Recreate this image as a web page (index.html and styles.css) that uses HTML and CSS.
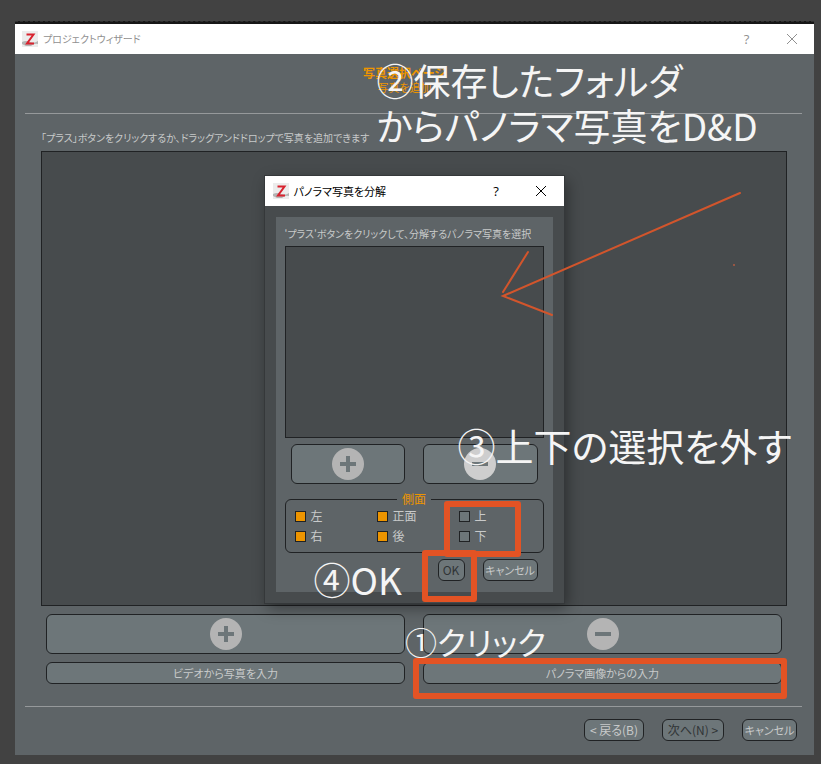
FILE: index.html
```html
<!DOCTYPE html>
<html lang="ja">
<head>
    <meta charset="UTF-8">
    <meta name="viewport" content="width=device-width, initial-scale=1.0">
    <title>プロジェクトウィザード</title>
    <link rel="stylesheet" href="styles.css">
</head>
<body>
    <div class="strip"></div>
    <div class="window">
        <!-- Title bar -->
        <div class="titlebar">
            <svg class="app-icon" viewBox="0 0 16 16">
                <rect width="16" height="16" fill="#ececec"/>
                <path d="M0 11 Q4 9 8 11 T16 10 V13 Q12 12 9 15 H4 L0 13Z" fill="#b4b4b4"/>
                <path d="M4.500 3.500 H11.500 L5 12.500 H12" fill="none" stroke="#d8232f" stroke-width="2"/>
            </svg>
            <span class="caption">プロジェクトウィザード</span>
            <button class="win-button" type="button" aria-label="ヘルプ">?</button>
            <button class="win-button" type="button" aria-label="閉じる">
                <svg viewBox="0 0 12 12"><path d="M1 1 L11 11 M11 1 L1 11"/></svg>
            </button>
        </div>

        <!-- Wizard page -->
        <div class="page-header">
            <h1>写真選択ページ</h1>
            <p>写真を追加</p>
        </div>

        <div class="page-body">
            <p class="hint">「プラス」ボタンをクリックするか、ドラッグアンドドロップで写真を追加できます</p>
            <div class="photo-list"></div>
            <div class="actions">
                <button class="btn big" type="button" aria-label="追加">
                    <svg viewBox="0 0 32 32"><circle cx="16" cy="16" r="16"/><path d="M8 16 H24 M16 8 V24"/></svg>
                </button>
                <button class="btn big" type="button" aria-label="削除">
                    <svg viewBox="0 0 32 32"><circle cx="16" cy="16" r="16"/><path d="M8 16 H24"/></svg>
                </button>
                <button class="btn" type="button">ビデオから写真を入力</button>
                <div class="marked">
                    <button class="btn" type="button">パノラマ画像からの入力</button>
                    <span class="frame frame-input"></span>
                    <span class="note note-click">①クリック</span>
                </div>
            </div>
        </div>

        <div class="page-footer">
            <button class="btn back" type="button">&lt; 戻る(B)</button>
            <button class="btn next" type="button" disabled>次へ(N) &gt;</button>
            <button class="btn cancel" type="button">キャンセル</button>
        </div>

        <!-- Panorama dialog -->
        <div class="dialog">
            <div class="titlebar active">
                <svg class="app-icon" viewBox="0 0 16 16">
                    <rect width="16" height="16" fill="#ececec"/>
                    <path d="M0 11 Q4 9 8 11 T16 10 V13 Q12 12 9 15 H4 L0 13Z" fill="#b4b4b4"/>
                    <path d="M4.500 3.500 H11.500 L5 12.500 H12" fill="none" stroke="#d8232f" stroke-width="2"/>
                </svg>
                <span class="caption">パノラマ写真を分解</span>
                <button class="win-button" type="button" aria-label="ヘルプ">?</button>
                <button class="win-button" type="button" aria-label="閉じる">
                    <svg viewBox="0 0 12 12"><path d="M1 1 L11 11 M11 1 L1 11"/></svg>
                </button>
            </div>
            <div class="panel">
                <p class="hint">'プラス'ボタンをクリックして、分解するパノラマ写真を選択</p>
                <div class="pano-list"></div>
                <div class="pano-actions">
                    <button class="btn big" type="button" aria-label="追加">
                        <svg viewBox="0 0 32 32"><circle cx="16" cy="16" r="16"/><path d="M8 16 H24 M16 8 V24"/></svg>
                    </button>
                    <button class="btn big light" type="button" aria-label="削除">
                        <svg viewBox="0 0 32 32"><circle cx="16" cy="16" r="16"/><path d="M8 16 H24"/></svg>
                    </button>
                </div>
                <fieldset class="sides">
                    <legend>側面</legend>
                    <div class="side-grid">
                        <label><input type="checkbox" checked>左</label>
                        <label><input type="checkbox" checked>正面</label>
                        <label><input type="checkbox">上</label>
                        <label><input type="checkbox" checked>右</label>
                        <label><input type="checkbox" checked>後</label>
                        <label><input type="checkbox">下</label>
                    </div>
                </fieldset>
                <div class="dialog-footer">
                    <button class="btn ok" type="button" disabled>OK</button>
                    <button class="btn cancel" type="button">キャンセル</button>
                </div>
            </div>

            <!-- Handwritten guide on top of the dialog -->
            <span class="frame frame-sides"></span>
            <span class="frame frame-ok"></span>
            <svg class="arrow" viewBox="0 0 260 130">
                <path d="M240 3 L3 106 L52 125 M28 62 L3 102"/>
                <circle cx="234" cy="75" r="1"/>
            </svg>
            <span class="note note-drop">②保存したフォルダ<br>からパノラマ写真をD&amp;D</span>
            <span class="note note-sides">③上下の選択を外す</span>
            <span class="note note-ok">④OK</span>
        </div>
    </div>
</body>
</html>
```

FILE: styles.css
```css
* {
    box-sizing: border-box;
}

body {
    margin: 0;
    padding: 21px 7px 9px 15px;
    min-height: 100vh;
    display: flex;
    flex-direction: column;
    background-color: #424242;
    color: #c8caca;
    font-family: "Noto Sans CJK JP", sans-serif;
    font-feature-settings: "palt";
    font-weight: 400;
    font-size: 11px;
    line-height: 16px;
}

h1, p {
    margin: 0;
}

button {
    font: inherit;
    font-feature-settings: inherit;
    color: inherit;
    padding: 0;
}

/* Edge of the window behind */
.strip {
    height: 3px;
    border-top: 1px dashed #303030;
    background-color: #161616;
}

.window {
    position: relative;
    flex: 1;
    display: flex;
    flex-direction: column;
    background-color: #5e6467;
}

/* Title bars */
.titlebar {
    display: flex;
    align-items: center;
    height: 30px;
    padding-left: 7px;
    background-color: #ffffff;
    color: #909090;
    font-size: 10px;
}

.titlebar.active {
    padding-left: 8px;
    color: #000000;
    font-size: 11px;
}

.app-icon {
    width: 16px;
    height: 16px;
    margin-right: 5px;
}

.caption {
    flex: 1;
}

.win-button {
    width: 45px;
    height: 30px;
    border: none;
    background: none;
    font-family: "Open Sans", sans-serif;
    font-size: 13px;
}

.win-button svg {
    display: block;
    width: 12px;
    height: 12px;
    margin: 0 auto;
    fill: none;
    stroke: currentColor;
}

/* Wizard page */
.page-header {
    margin: 0 12px 0 10px;
    padding: 11px 18px 18px 0;
    border-bottom: 1px solid #96999b;
    color: #ee9500;
    text-align: center;
    line-height: 15px;
}

.page-header h1 {
    font-size: 12px;
    line-height: 15px;
    font-weight: 700;
}

.page-body {
    flex: 1;
    display: flex;
    flex-direction: column;
    padding: 16px 27px 22px 26px;
}

.hint {
    font-size: 10px;
    white-space: nowrap;
}

.photo-list {
    flex: 1;
    min-height: 200px;
    margin-top: 5px;
    border: 1px solid #202224;
    background-color: #474b4d;
}

.actions {
    display: grid;
    grid-template-columns: 1fr 1fr;
    gap: 8px 18px;
    padding: 8px 5px 0;
}

.btn {
    width: 100%;
    height: 22px;
    border: 1px solid #202224;
    border-radius: 6px;
    background-color: #6d7679;
    line-height: 20px;
    white-space: nowrap;
}

.btn.big {
    height: 40px;
}

.btn.big svg {
    display: block;
    width: 32px;
    height: 32px;
    margin: 0 auto;
    fill: #b4b4b4;
    stroke: none;
}

.btn.big path {
    fill: none;
    stroke: #6d7679;
    stroke-width: 4;
}

.btn.light svg {
    fill: #cecece;
}

.btn:disabled {
    color: #303436;
}

.page-footer {
    display: flex;
    justify-content: flex-end;
    gap: 18px;
    margin: 0 12px 0 10px;
    padding: 12px 5px 14px;
    border-top: 1px solid #96999b;
}

.btn.back {
    width: 60px;
    font-size: 12px;
}

.btn.next {
    width: 62px;
    font-size: 12px;
}

.btn.cancel {
    width: 55px;
}

/* Panorama dialog */
.dialog {
    position: absolute;
    top: 152px;
    left: calc(50% - 150px);
    width: 299px;
    background-color: #474b4d;
    box-shadow: 0 0 0 1px #35383a, 3px 5px 14px rgba(0, 0, 0, 0.4);
}

.panel {
    margin: 11px;
    padding: 9px;
    background-color: #5e6467;
}

.pano-list {
    height: 192px;
    margin-top: 4px;
    border: 1px solid #202224;
    background-color: #474b4d;
}

.pano-actions {
    display: grid;
    grid-template-columns: 1fr 1fr;
    gap: 18px;
    padding: 6px;
}

.sides {
    margin: 2px 0 0;
    padding: 0 0 6px;
    border: 1px solid #202224;
    border-radius: 6px;
}

.sides legend {
    margin: 0 auto;
    padding: 0 5px;
    color: #ee9500;
    font-size: 12px;
    line-height: 14px;
}

.side-grid {
    display: grid;
    grid-template-columns: 82px 82px 1fr;
    padding-left: 9px;
}

.side-grid label {
    display: flex;
    align-items: center;
    gap: 5px;
    height: 20px;
    font-size: 12px;
}

.side-grid input {
    appearance: none;
    width: 11px;
    height: 11px;
    margin: 0;
    border: 1px solid #202224;
    background-color: #6d7679;
}

.side-grid input:checked {
    background-color: #ee9500;
}

.dialog-footer {
    display: flex;
    justify-content: flex-end;
    gap: 18px;
    padding: 6px 6px 2px;
}

.btn.ok {
    width: 27px;
    font-size: 12px;
}

/* Guide marks */
.marked {
    position: relative;
}

.frame {
    position: absolute;
    border: 6px solid #e35324;
    border-radius: 3px;
}

.frame-input {
    top: -4px;
    right: -5px;
    bottom: -15px;
    left: -10px;
}

.frame-sides {
    top: 325px;
    left: 179px;
    width: 77px;
    height: 56px;
}

.frame-ok {
    top: 374px;
    left: 157px;
    width: 55px;
    height: 52px;
}

.arrow {
    position: absolute;
    top: 14px;
    left: 235px;
    width: 260px;
    height: 130px;
    fill: #b35a40;
}

.arrow path {
    fill: none;
    stroke: #d2552c;
    stroke-width: 2;
    stroke-linecap: round;
}

.note {
    position: absolute;
    color: #f5f5f5;
    font-size: 37px;
    font-weight: 400;
    line-height: 45px;
    white-space: nowrap;
}

.note-click {
    top: -43px;
    left: -18px;
    font-size: 32px;
}

.note-drop {
    top: -118px;
    left: 112px;
}

.note-sides {
    top: 246px;
    left: 193px;
    font-size: 38px;
}

.note-ok {
    top: 381px;
    left: 49px;
}
```
